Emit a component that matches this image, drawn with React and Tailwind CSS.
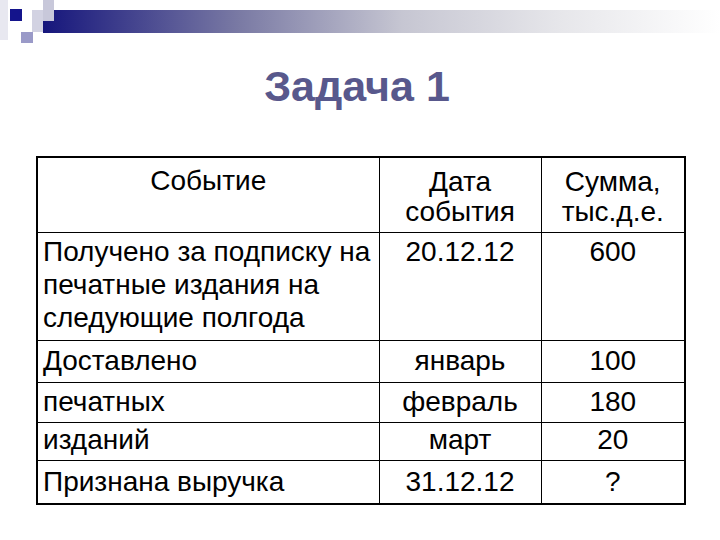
const rows = [
  { h: "h-[108px]", event: ["Получено за подписку на", "печатные издания на", "следующие полгода"], date: "20.12.12", sum: "600", pt: "pt-[2px]" },
  { h: "h-[42px]", event: ["Доставлено"], date: "январь", sum: "100", pt: "pt-[3px]" },
  { h: "h-[40px]", event: ["печатных"], date: "февраль", sum: "180", pt: "pt-[2px]" },
  { h: "h-[38px]", event: ["изданий"], date: "март", sum: "20", pt: "pt-[0px]" },
  { h: "h-[44px]", event: ["Признана выручка"], date: "31.12.12", sum: "?", pt: "pt-[4px]" },
];

const Decor = () => (
  <svg width="720" height="45" viewBox="0 0 720 45" className="block">
    <defs>
      <linearGradient id="bar" x1="0" y1="0" x2="1" y2="0">
        <stop offset="0" stopColor="#16167c" />
        <stop offset="0.29" stopColor="#7a7aa4" />
        <stop offset="0.53" stopColor="#c6c6d2" />
        <stop offset="0.76" stopColor="#e6e6ea" />
        <stop offset="1" stopColor="#ffffff" />
      </linearGradient>
    </defs>
    <rect x="0" y="0" width="8" height="40" fill="#e8e8f0" />
    <rect x="10" y="9" width="12" height="12" fill="#14148c" />
    <rect x="43" y="10" width="677" height="23" fill="url(#bar)" />
    <rect x="32" y="10" width="11" height="22" fill="#d2d2e2" />
    <rect x="43" y="0" width="11" height="21" fill="#c8c8da" />
    <rect x="21" y="32" width="12" height="11" fill="#9a9ac8" />
  </svg>
);

export default function App() {
  return (
    <div className="w-[720px] h-[540px] bg-white overflow-hidden font-['Liberation_Sans',Arial,sans-serif]">
      <Decor />
      <h1 className="mt-[20px] h-[42px] leading-[42px] text-center text-[43px] font-bold text-[#58588c] pr-[6px]">
        Задача 1
      </h1>
      <table className="mt-[49px] ml-[36px] w-[648px] table-fixed border-collapse border-2 border-black text-[28px] text-black">
        <colgroup>
          <col className="w-[342px]" />
          <col className="w-[162px]" />
          <col className="w-[144px]" />
        </colgroup>
        <tbody>
          <tr className="h-[75px]">
            <td className="border border-black align-top text-center pt-[8px] leading-[30px]">Событие</td>
            <td className="border border-black align-top text-center pt-[9px] leading-[30px]">
              Дата<br />события
            </td>
            <td className="border border-black align-top text-center pt-[9px] leading-[30px]">
              Сумма,<br />тыс.д.е.
            </td>
          </tr>
          {rows.map((r, i) => (
            <tr key={i} className={r.h}>
              <td className={`border border-black align-top px-[5px] leading-[33px] ${r.pt}`}>
                {r.event.map((line, j) => (
                  <div key={j}>{line}</div>
                ))}
              </td>
              <td className={`border border-black align-top text-center leading-[33px] ${r.pt}`}>{r.date}</td>
              <td className={`border border-black align-top text-center leading-[33px] ${r.pt}`}>{r.sum}</td>
            </tr>
          ))}
        </tbody>
      </table>
    </div>
  );
}
